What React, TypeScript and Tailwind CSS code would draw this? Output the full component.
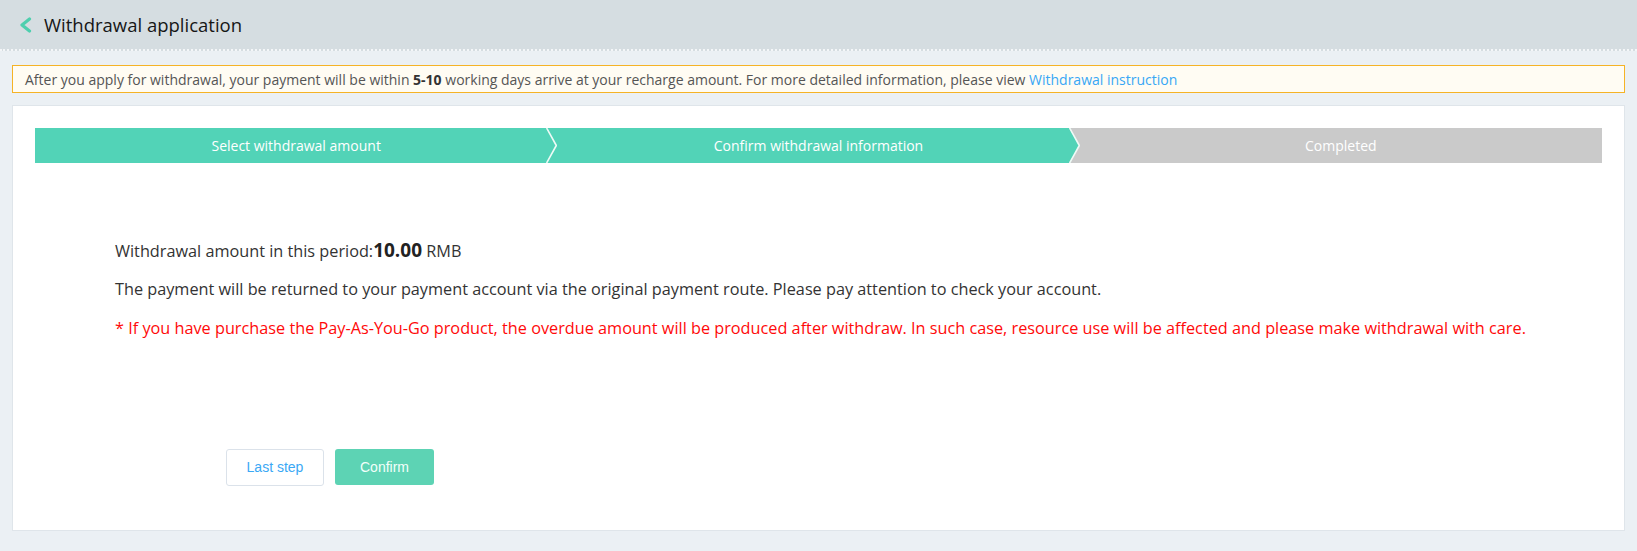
import { ReactNode } from "react";

const font = { fontFamily: '"Open Sans", "Noto Sans", sans-serif' };

interface IStep {
  label: string;
  color: string;
  nextColor?: string;
  done: boolean;
}

const steps: IStep[] = [
  { label: "Select withdrawal amount", color: "#52d3b7", nextColor: "#52d3b7", done: true },
  { label: "Confirm withdrawal information", color: "#52d3b7", nextColor: "#cacaca", done: true },
  { label: "Completed", color: "#cacaca", done: false },
];

const StepItem = ({ label, color, nextColor, done }: IStep) => {
  return (
    <div
      className={
        "relative flex-1 flex items-center justify-center text-[14px] text-white " +
        (done ? "bg-[#52d3b7]" : "bg-[#cacaca]")
      }
    >
      <span>{label}</span>
      {nextColor && (
        <svg
          className="absolute top-0 right-0 h-[35px] w-[11px]"
          viewBox="0 0 11 35"
          preserveAspectRatio="none"
        >
          <rect x="0" y="0" width="11" height="35" fill={nextColor} />
          <polygon points="0,0 10.5,17.5 0,35" fill={color} />
          <polyline
            points="0.6,0 10.3,17.5 0.6,35"
            fill="none"
            stroke="#eefaf6"
            strokeWidth="1.6"
          />
        </svg>
      )}
    </div>
  );
};

const Line = ({ children, className }: { children: ReactNode; className?: string }) => (
  <p className={"leading-[24px] text-[16.25px] " + (className ?? "")}>{children}</p>
);

export default function App() {
  return (
    <div className="w-full min-h-[551px] bg-[#ebf0f4] text-[#333]" style={font}>
      <header className="h-[51px] bg-[#d5dde1] border-b-2 border-dotted border-[#f4f6f8] flex items-center pl-[19px]">
        <svg width="13" height="16" viewBox="0 0 13 16" className="mt-[1px]">
          <polyline
            points="10.5,2 3,8 10.5,14"
            fill="none"
            stroke="#4ecfae"
            strokeWidth="3.2"
            strokeLinecap="round"
            strokeLinejoin="round"
          />
        </svg>
        <h1 className="ml-[12px] text-[18.5px] text-[#161616]">Withdrawal application</h1>
      </header>

      <div className="mx-[12px] mt-[14px] h-[28px] border border-[#f5b326] bg-[#fffcf3] pl-[12px] flex items-center text-[14px] text-[#555]">
        <span>
          After you apply for withdrawal, your payment will be within <b className="text-[#333]">5-10</b> working
          days arrive at your recharge amount. For more detailed information, please view{" "}
          <a className="text-[#38a7f5] cursor-pointer">Withdrawal instruction</a>
        </span>
      </div>

      <div className="mx-[12px] mt-[12px] h-[426px] bg-white border border-[#dfe5ea] px-[22px] pt-[22px]">
        <div className="flex h-[35px]">
          {steps.map((s) => (
            <StepItem key={s.label} {...s} />
          ))}
        </div>

        <div className="pl-[80px] mt-[75px]">
          <Line>
            Withdrawal amount in this period:
            <span className="text-[19px] font-bold text-[#222]">10.00</span> RMB
          </Line>
          <Line className="mt-[14px]">
            The payment will be returned to your payment account via the original payment route. Please pay attention
            to check your account.
          </Line>
          <Line className="mt-[15px] text-[#ff0a0a]">
            * If you have purchase the Pay-As-You-Go product, the overdue amount will be produced after withdraw. In
            such case, resource use will be affected and please make withdrawal with care.
          </Line>
        </div>

        <div
          className="flex gap-[11px] ml-[191px] mt-[109px] text-[14px]"
          style={{ fontFamily: '"Liberation Sans", Arial, sans-serif' }}
        >
          <button className="w-[98px] h-[37px] border border-[#dbe2ea] rounded-[3px] bg-white text-[#3aa8f5]">
            Last step
          </button>
          <button className="w-[99px] h-[36px] rounded-[3px] bg-[#5dd3b4] text-[#f2fffa]">Confirm</button>
        </div>
      </div>
    </div>
  );
}
